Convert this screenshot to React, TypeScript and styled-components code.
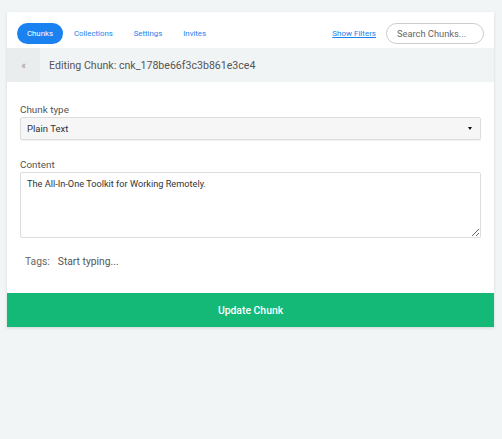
import * as React from "react";
import styled, { createGlobalStyle } from "styled-components";

const GlobalStyle = createGlobalStyle`
  html, body {
    margin: 0;
    padding: 0;
    background: #f1f5f5;
    font-family: Roboto, "Liberation Sans", sans-serif;
  }
`;

const Page = styled.div`
  padding: 12px 8px 0 7px;
  min-height: 439px;
  box-sizing: border-box;
`;

const Card = styled.div`
  background: #fff;
  box-shadow: 0 1px 3px rgba(0, 0, 0, 0.12);
`;

const NavBar = styled.div`
  display: flex;
  align-items: flex-start;
  height: 36px;
  box-sizing: border-box;
  padding: 11px 10px 0;
  gap: 1px;
`;

const NavLink = styled.a<{ $active?: boolean }>`
  display: inline-flex;
  align-items: center;
  height: 21px;
  padding: 0 10px;
  border-radius: 11px;
  font-size: 7.8px;
  color: ${(p) => (p.$active ? "#fff" : "#1a82f0")};
  background: ${(p) => (p.$active ? "#1a82f0" : "transparent")};
  cursor: pointer;
`;

const Spacer = styled.div`
  flex: 1;
`;

const FilterLink = styled.a`
  display: inline-flex;
  align-items: center;
  height: 21px;
  font-size: 8px;
  color: #1a82f0;
  text-decoration: underline;
  margin-right: 9px;
  cursor: pointer;
`;

const Search = styled.input`
  width: 98px;
  height: 21px;
  box-sizing: border-box;
  border: 1px solid #ccc;
  border-radius: 11px;
  padding: 0 10px;
  font-family: inherit;
  font-size: 9.3px;
  color: #555;
  outline: none;
  &::placeholder {
    color: #666;
  }
`;

const Header = styled.div`
  display: flex;
  align-items: center;
  height: 34px;
  background: #f1f4f5;
`;

const BackButton = styled.div`
  width: 33px;
  align-self: stretch;
  display: flex;
  align-items: center;
  justify-content: center;
  background: #eaeded;
  color: #999;
  font-size: 10px;
`;

const HeaderTitle = styled.div`
  margin-left: 9px;
  font-size: 10.6px;
  color: #555;
`;

const Body = styled.div`
  padding: 22px 13px 0 13px;
`;

const Label = styled.div`
  font-size: 9.9px;
  line-height: 12px;
  color: #555;
  margin-bottom: 1px;
`;

const Select = styled.div`
  display: flex;
  align-items: center;
  justify-content: space-between;
  height: 23px;
  box-sizing: border-box;
  border: 1px solid #ddd;
  border-radius: 2px;
  background: #f6f6f6;
  padding: 0 8px 0 6px;
  font-size: 9.5px;
  color: #333;
  box-shadow: 0 1px 1px rgba(0, 0, 0, 0.06);
`;

const Caret = styled.span`
  width: 0;
  height: 0;
  border-left: 2.5px solid transparent;
  border-right: 2.5px solid transparent;
  border-top: 3px solid #111;
`;

const Field = styled.div<{ $gap: number }>`
  margin-bottom: ${(p) => p.$gap}px;
`;

const TextArea = styled.textarea`
  display: block;
  width: 100%;
  height: 66px;
  box-sizing: border-box;
  border: 1px solid #ddd;
  border-radius: 2px;
  padding: 5px 6px;
  font-family: inherit;
  font-size: 9.2px;
  color: #333;
  resize: vertical;
  outline: none;
`;

const TagsRow = styled.div`
  display: flex;
  align-items: center;
  gap: 8px;
  padding: 0 5px;
  height: 14px;
  font-size: 10.3px;
  color: #666;
`;

const TagsInput = styled.input`
  border: none;
  outline: none;
  font-family: inherit;
  font-size: 10.3px;
  color: #555;
  padding: 0;
  &::placeholder {
    color: #555;
  }
`;

const UpdateButton = styled.button`
  display: block;
  width: 100%;
  height: 34px;
  margin-top: 25px;
  border: none;
  background: #14b877;
  color: #fff;
  font-family: inherit;
  font-size: 10.4px;
  font-weight: 500;
  cursor: pointer;
`;

export default function App() {
  return (
    <>
      <GlobalStyle />
      <Page>
        <Card>
          <NavBar>
            <NavLink $active>Chunks</NavLink>
            <NavLink>Collections</NavLink>
            <NavLink>Settings</NavLink>
            <NavLink>Invites</NavLink>
            <Spacer />
            <FilterLink>Show Filters</FilterLink>
            <Search placeholder="Search Chunks..." />
          </NavBar>
          <Header>
            <BackButton>«</BackButton>
            <HeaderTitle>Editing Chunk: cnk_178be66f3c3b861e3ce4</HeaderTitle>
          </Header>
          <Body>
            <Field $gap={19}>
              <Label>Chunk type</Label>
              <Select>
                <span>Plain Text</span>
                <Caret />
              </Select>
            </Field>
            <Field $gap={16}>
              <Label>Content</Label>
              <TextArea defaultValue="The All-In-One Toolkit for Working Remotely." />
            </Field>
            <TagsRow>
              <span>Tags:</span>
              <TagsInput placeholder="Start typing..." />
            </TagsRow>
          </Body>
          <UpdateButton>Update Chunk</UpdateButton>
        </Card>
      </Page>
    </>
  );
}
